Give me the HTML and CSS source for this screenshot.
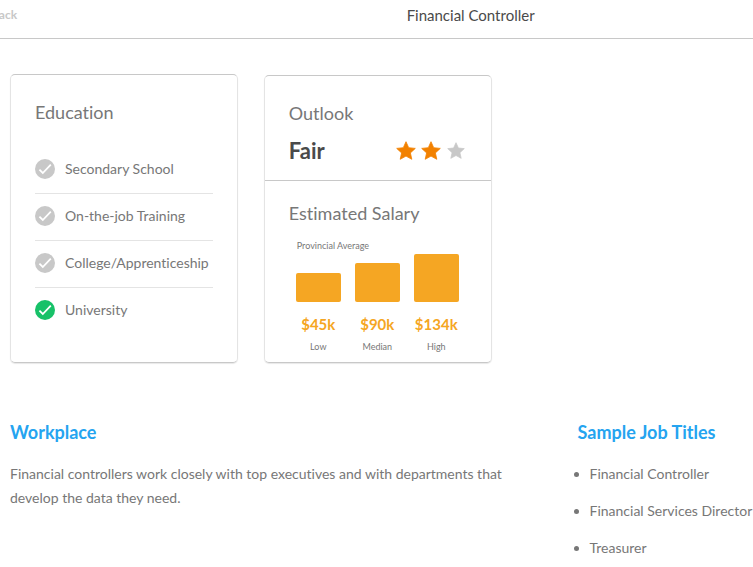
FILE: index.html
```html
<!DOCTYPE html>
<html lang="en">
<head>
<meta charset="utf-8">
<title>Financial Controller</title>
<link rel="stylesheet" href="styles.css">
</head>
<body>
<svg class="sprite" aria-hidden="true">
  <symbol id="check" viewBox="0 0 20 20"><circle cx="10" cy="10" r="10"/><path d="M4.4 10.6l3.4 3.4 8-8.4" fill="none" stroke="#fff" stroke-width="1.8"/></symbol>
  <symbol id="star" viewBox="0 0 20 19"><path d="M10 .7l2.7 6 6.6.7-4.9 4.5 1.4 6.4L10 15.1l-5.8 3.2 1.4-6.4L.7 7.4l6.6-.7z" stroke="currentColor" stroke-width=".8" stroke-linejoin="round"/></symbol>
</svg>
<header class="bar">
  <div class="bar-inner">
    <a class="back" href="#">Back</a>
    <h1 class="bar-title">Financial Controller</h1>
  </div>
</header>
<main class="page">
  <div class="cards">
    <section class="card education">
      <h2 class="card-title">Education</h2>
      <ul class="levels">
        <li class="level"><svg class="tick"><use href="#check"/></svg>Secondary School</li>
        <li class="level"><svg class="tick"><use href="#check"/></svg>On-the-job Training</li>
        <li class="level"><svg class="tick"><use href="#check"/></svg>College/Apprenticeship</li>
        <li class="level"><svg class="tick tick-on"><use href="#check"/></svg>University</li>
      </ul>
    </section>
    <div class="card summary">
      <section class="outlook">
        <h2 class="card-title">Outlook</h2>
        <div class="rating">
          <strong class="rating-name">Fair</strong>
          <div class="stars" role="img" aria-label="2 of 3">
            <svg class="star"><use href="#star"/></svg>
            <svg class="star"><use href="#star"/></svg>
            <svg class="star star-off"><use href="#star"/></svg>
          </div>
        </div>
      </section>
      <section class="salary">
        <h2 class="card-title">Estimated Salary</h2>
        <p class="note">Provincial Average</p>
        <div class="chart">
          <div class="col"><div class="col-bar" style="height:29px"></div><b class="amount">$45k</b><span class="col-name">Low</span></div>
          <div class="col"><div class="col-bar" style="height:39px"></div><b class="amount">$90k</b><span class="col-name">Median</span></div>
          <div class="col"><div class="col-bar" style="height:48px"></div><b class="amount">$134k</b><span class="col-name">High</span></div>
        </div>
      </section>
    </div>
  </div>
  <section class="workplace">
    <h2 class="heading">Workplace</h2>
    <p class="body-text">Financial controllers work closely with top executives and with departments that develop the data they need.</p>
  </section>
  <section class="titles">
    <h2 class="heading">Sample Job Titles</h2>
    <ul class="title-list">
      <li>Financial Controller</li>
      <li>Financial Services Director</li>
      <li>Treasurer</li>
    </ul>
  </section>
</main>
</body>
</html>
```
FILE: styles.css
```css
* { box-sizing: border-box; }
body {
  margin: 0;
  background: #fff;
  color: #777;
  font: 14px/24px Lato, "Open Sans", sans-serif;
  font-variant-ligatures: none;
  overflow-x: hidden;
}
h1, h2, p, ul { margin: 0; padding: 0; font-weight: 400; }
.sprite { display: block; width: 0; height: 0; }
.bar { border-bottom: 1px solid #c8c8c8; overflow: hidden; }
.bar-inner {
  display: grid;
  grid-template-columns: 1fr auto 1fr;
  width: 125%;
  padding: 3px 0 11px;
}
.back {
  margin-left: -9px;
  color: #c8c8c8;
  font-size: 12px;
  font-weight: 700;
  text-decoration: none;
}
.bar-title { color: #4a4a4a; font-size: 15px; }
.page {
  display: grid;
  grid-template-columns: 11fr 4fr;
  column-gap: 85px;
  padding: 35px 0 0 10px;
}
.cards { display: grid; grid-template-columns: 1fr 1fr; gap: 26px; padding-right: 1px; }
.workplace { grid-column: 1; }
.card {
  border: 1px solid #e4e4e4;
  border-top-color: #c8c8c8;
  border-bottom-color: #c8c8c8;
  border-radius: 5px;
  box-shadow: 0 1px 1px #e8e8e8;
}
.education { padding: 25px 24px; }
.summary { margin-top: 1px; }
.card-title { font-size: 18px; line-height: 24px; }
.levels { margin-top: 23px; list-style: none; }
.level {
  display: flex;
  align-items: center;
  gap: 10px;
  height: 47px;
  padding-bottom: 2px;
  border-bottom: 1px solid #e4e4e4;
  white-space: nowrap;
}
.level:last-child { height: 46px; border: 0; }
.tick { flex: none; width: 20px; height: 20px; fill: #c8c8c8; }
.tick-on { fill: #17c168; }
.outlook { padding: 25px 25px 14px 24px; border-bottom: 1px solid #c8c8c8; }
.rating { display: flex; align-items: center; justify-content: space-between; margin-top: 11px; }
.rating-name { color: #4a4a4a; font-size: 22px; line-height: 30px; }
.stars { display: flex; align-items: center; gap: 5px; padding-bottom: 2px; }
.star { width: 20px; height: 19px; color: #f28100; fill: currentColor; }
.star-off { height: 17px; color: #c8c8c8; }
.salary { padding: 20px 24px 7px; }
.note { margin: 13px 0 0 8px; font-size: 9px; line-height: 16px; }
.chart { display: flex; align-items: flex-end; gap: 14px; padding-left: 7px; }
.col { display: flex; flex-direction: column; align-items: center; width: 45px; }
.col-bar { width: 100%; border-radius: 2px; background: #f5a623; }
.amount { margin-top: 10px; color: #f5a623; font-size: 15px; line-height: 24px; }
.col-name { margin-top: 3px; font-size: 9px; line-height: 16px; }
.workplace, .titles { padding-top: 57px; }
.heading { margin-bottom: 18px; color: #25a4f0; font-size: 18px; font-weight: 700; line-height: 24px; white-space: nowrap; }
.body-text { margin-right: -24px; }
.title-list { padding-left: 12px; white-space: nowrap; }
.title-list li { margin-bottom: 13px; }
```
